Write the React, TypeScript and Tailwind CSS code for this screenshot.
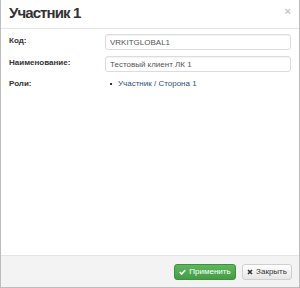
import React from "react";

const font = { fontFamily: '"Liberation Sans", Arial, sans-serif' };

const label = "w-[96px] shrink-0 text-[8px] leading-[10px] font-bold text-[#333] mt-[-2px]";
const input =
  "flex-1 min-w-0 h-[16px] border border-[#dcdcdc] rounded-[3px] px-[4px] text-[8px] leading-[14px] text-[#555] bg-white outline-none shadow-[inset_0_1px_1px_rgba(0,0,0,0.05)]";

export default function App() {
  return (
    <div className="w-[300px] h-[288px] bg-white" style={font}>
      <div className="w-[300px] h-[288px] flex flex-col border-x border-b border-[#bdbdbd] bg-white">
        {/* Header */}
        <div className="h-[29px] shrink-0 flex items-center justify-between border-b border-[#e5e5e5] pl-[8px] pr-[8px]">
          <h1 className="text-[15px] leading-[16px] font-bold tracking-[-0.9px] text-[#333] mt-[-2px]">Участник 1</h1>
          <button className="text-[11px] leading-none font-bold text-[#c8c8c8] mt-[-6px]">×</button>
        </div>

        {/* Body */}
        <div className="flex-1 flex flex-col gap-[6px] pt-[5px] pl-[8px] pr-[8px]">
          <div className="flex items-center">
            <label className={label}>Код:</label>
            <input className={input} defaultValue="VRKITGLOBAL1" readOnly />
          </div>
          <div className="flex items-center">
            <label className={label}>Наименование:</label>
            <input className={input} defaultValue="Тестовый клиент ЛК 1" readOnly />
          </div>
          <div className="flex items-center mt-[3px]">
            <label className={label}>Роли:</label>
            <ul className="pl-[5px]">
              <li className="flex items-center gap-[6px] text-[8px] leading-[10px] text-[#2d4f78] mt-[-2px]">
                <span className="w-[2px] h-[2px] bg-[#333]" />
                Участник / Сторона 1
              </li>
            </ul>
          </div>
        </div>

        {/* Footer */}
        <div className="h-[32px] shrink-0 flex items-center justify-end gap-[6px] border-t border-[#e5e5e5] bg-[#f3f3f3] pr-[7px]">
          <button className="h-[16px] w-[62px] flex items-center justify-center gap-[3px] rounded-[3px] border border-[#3e8f3e] bg-gradient-to-b from-[#5cb85c] to-[#449d44] text-white text-[8px] leading-none">
            <svg width="7" height="6" viewBox="0 0 7 6">
              <path d="M0.7 3 L2.7 5 L6.3 1" stroke="white" strokeWidth="1.6" fill="none" />
            </svg>
            Применить
          </button>
          <button className="h-[16px] w-[50px] flex items-center justify-center gap-[3px] rounded-[3px] border border-[#d0d0d0] bg-gradient-to-b from-white to-[#e6e6e6] text-[#333] text-[8px] leading-none">
            <svg width="6" height="6" viewBox="0 0 6 6">
              <path d="M1 1 L5 5 M5 1 L1 5" stroke="#333" strokeWidth="1.6" />
            </svg>
            Закрыть
          </button>
        </div>
      </div>
    </div>
  );
}
